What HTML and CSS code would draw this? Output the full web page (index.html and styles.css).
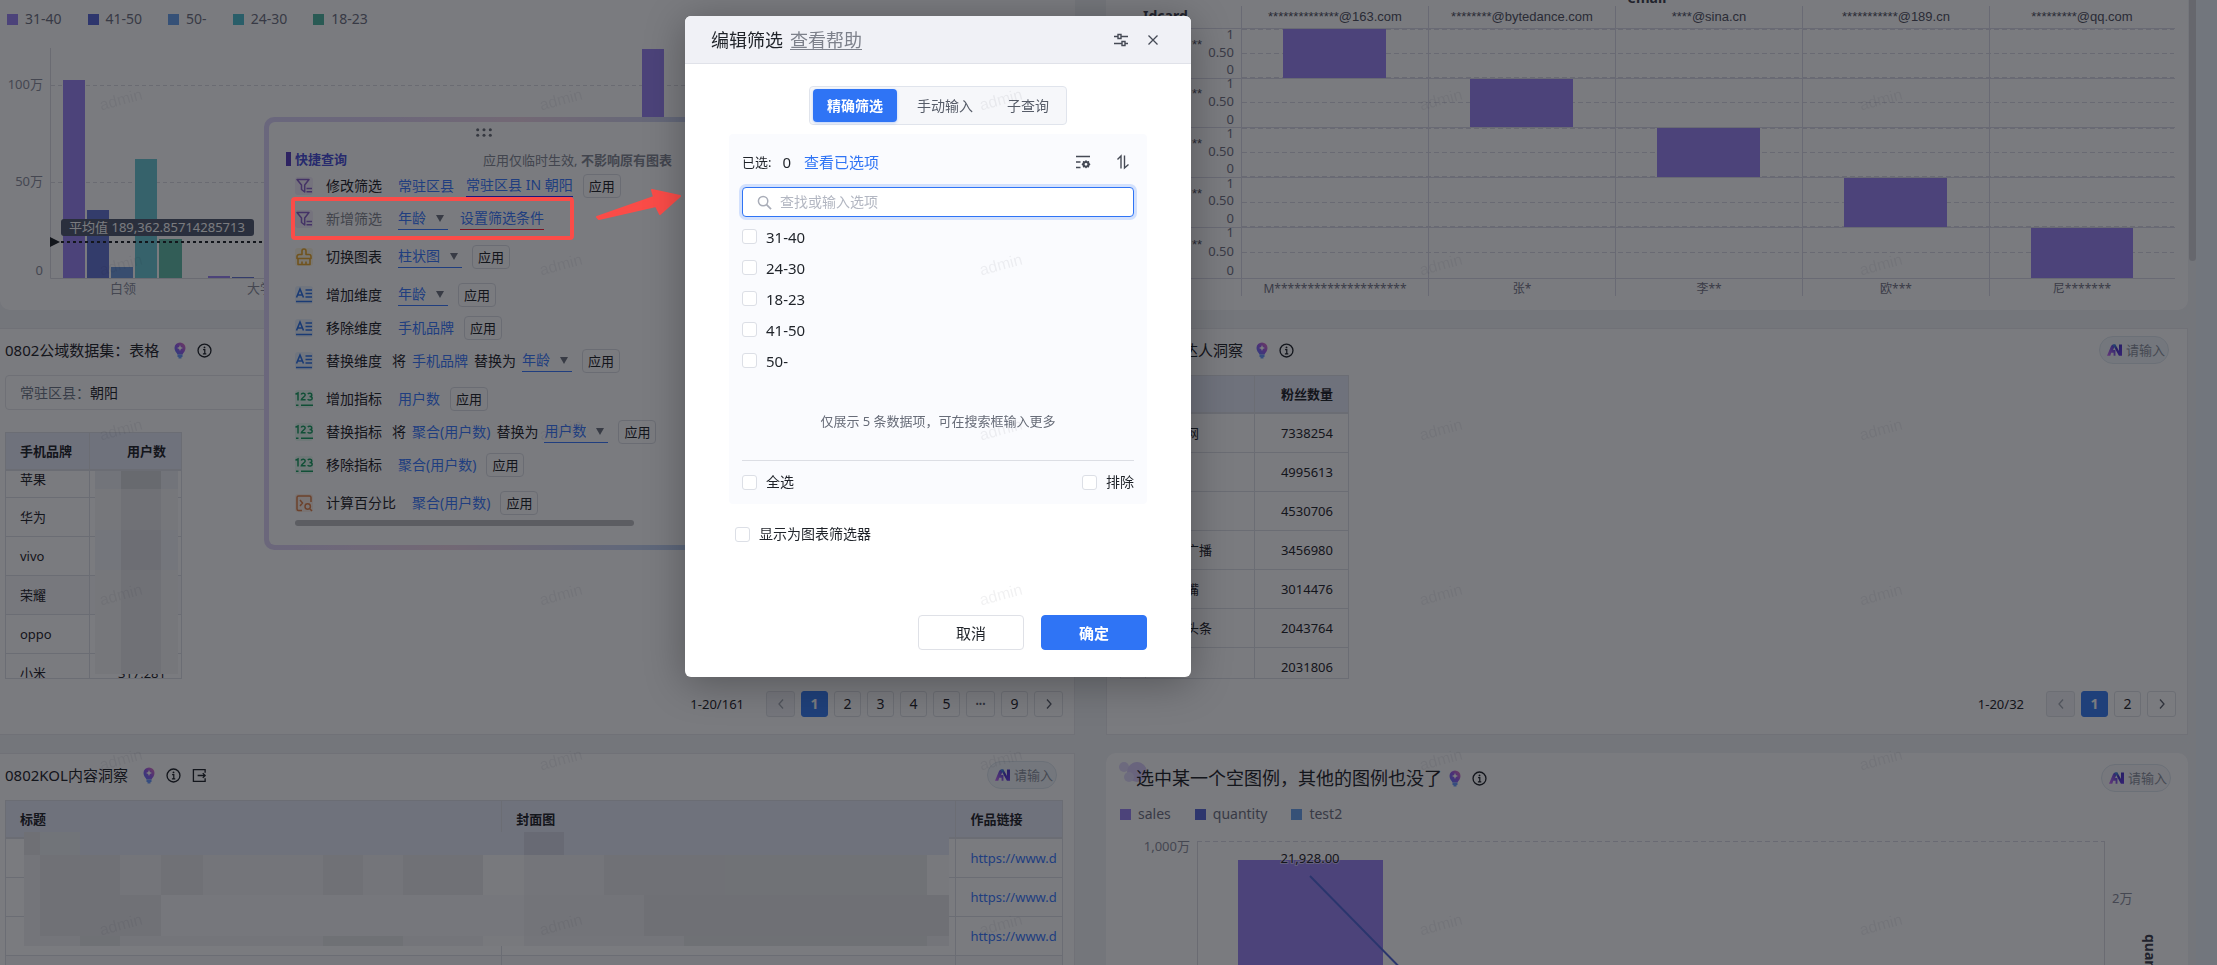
FILE: index.html
```html
<!DOCTYPE html>
<html lang="zh-CN">
<head>
<meta charset="utf-8">
<title>编辑筛选</title>
<link rel="stylesheet" href="styles.css">
</head>
<body>
<svg class="defs" aria-hidden="true">
  <defs>
    <linearGradient id="bulbGrad" x1="0" y1="1" x2="1" y2="0"><stop offset="0" stop-color="#5b7cff"/><stop offset=".5" stop-color="#9a5cf0"/><stop offset="1" stop-color="#f07ab8"/></linearGradient>
    <linearGradient id="logoA" x1="0" y1="1" x2="1" y2="0"><stop offset="0" stop-color="#d06cf5"/><stop offset="1" stop-color="#4a48d8"/></linearGradient>
    <linearGradient id="logoN" x1="0" y1="0" x2="1" y2="1"><stop offset="0" stop-color="#38b6e8"/><stop offset=".4" stop-color="#4b35c9"/><stop offset="1" stop-color="#6a3fe8"/></linearGradient>
    <symbol id="i-bulb" viewBox="0 0 12 17"><path d="M6 .5A5.500 5.500 0 0 0 .5 6c0 3 2 4.500 3 6.500h5c1-2 3-3.500 3-6.500A5.500 5.500 0 0 0 6 .5z" fill="url(#bulbGrad)"/><path d="M6 3l.9 2.100L9 6l-2.100.9L6 9l-.9-2.100L3 6l2.100-.9z" fill="#fff"/><path d="M3.500 12.500h5V15h-1v1.500h-3V15h-1z" fill="#6c9cff"/></symbol>
    <symbol id="i-info" viewBox="0 0 16 16"><circle cx="8" cy="8" r="6.900" fill="none" stroke="#1f2329" stroke-width="1.400"/><path d="M6.500 7h1.800v4.500M6.300 11.500h3.600" fill="none" stroke="#1f2329" stroke-width="1.300"/><circle cx="8" cy="4.700" r="1" fill="#1f2329"/></symbol>
    <symbol id="i-exit" viewBox="0 0 16 16"><path d="M14 5V1.700H1.500v12.600H14V11M6 8h8.500M11.500 5.500L14 8l-2.500 2.500" fill="none" stroke="#1f2329" stroke-width="1.400"/></symbol>
    <symbol id="i-logo" viewBox="0 0 16 14"><path d="M0 13L4 3.500C4.500 2 5.200 1 7 1h2L6.500 7H9v6H7v-3H4.500L3.500 13z" fill="url(#logoA)"/><path d="M6 1h3l3.800 7V1H16v12h-3.300L8 4.500z" fill="url(#logoN)"/></symbol>
    <symbol id="i-funnel" viewBox="0 0 18 18"><rect width="18" height="18" rx="3" fill="#f4edfb"/><path d="M2 2.500h12L9.700 8v7L6.500 12.500V8zM11.500 11.500H17M11.500 14.800H17" fill="none" stroke="#8a63c8" stroke-width="1.500" stroke-linejoin="round"/></symbol>
    <symbol id="i-brush" viewBox="0 0 18 18"><rect width="18" height="18" rx="3" fill="#fdf6e2"/><path d="M7 6.500V3a2 2 0 0 1 4 0v3.500h3a2 2 0 0 1 2 2V10.500H2V8.500a2 2 0 0 1 2-2zM3 10.500V16.500h12V10.500M7 13.500v3M11 13.500v3" fill="none" stroke="#eaa92c" stroke-width="1.600" stroke-linejoin="round"/></symbol>
    <symbol id="i-dim" viewBox="0 0 18 18"><rect width="18" height="18" rx="3" fill="#eaf2fd"/><path d="M1.500 11.500L5 3l3.500 8.500M2.800 9h4.400M10.500 4H17M10.500 7.500H17M10.500 11H17M1 15.500h16" fill="none" stroke="#2f74e8" stroke-width="1.600"/></symbol>
    <symbol id="i-num" viewBox="0 0 18 18"><rect width="18" height="18" rx="3" fill="#e8f8f0"/><path d="M.5 4.200L3 3v7.500M6.200 4.500c.4-1.700 4-1.700 4 .4 0 1.500-3.400 3-3.800 4.800h4.200M12.800 3.900c1-1.200 4-.9 4 1 0 1.300-1.300 1.600-2.300 1.600 1.400 0 2.700.4 2.700 1.800 0 2.100-3.400 2.200-4.600 1M6 15.300h12M1 15.300h2.500" fill="none" stroke="#1c9f63" stroke-width="1.500"/></symbol>
    <symbol id="i-calc" viewBox="0 0 18 18"><rect width="18" height="18" rx="3" fill="#fdf0e6"/><path d="M7 16.500H3.500a1.500 1.500 0 0 1-1.500-1.500V3.500A1.500 1.500 0 0 1 3.500 2h11A1.500 1.500 0 0 1 16 3.500V8M5 6l2.500 3L5 12M15 15l2 2" fill="none" stroke="#e0824a" stroke-width="1.500"/><circle cx="12.700" cy="12.500" r="2.700" fill="none" stroke="#e0824a" stroke-width="1.500"/></symbol>
    <symbol id="i-prev" viewBox="0 0 10 12"><path d="M7 1.500L3 6l4 4.500" fill="none" stroke="currentColor" stroke-width="1.300"/></symbol>
    <symbol id="i-next" viewBox="0 0 10 12"><path d="M3 1.500L7 6l-4 4.500" fill="none" stroke="currentColor" stroke-width="1.300"/></symbol>
  </defs>
</svg>

<div class="page">
  <main class="board">
    <section class="card card-top">
      <ul class="legend legend-top">
        <li><i class="c1"></i>31-40</li><li><i class="c2"></i>41-50</li><li><i class="c3"></i>50-</li><li><i class="c4"></i>24-30</li><li><i class="c5"></i>18-23</li>
      </ul>
      <svg class="chart chart-bars" viewBox="0 38 1075 258" preserveAspectRatio="xMinYMin meet">
        <path class="axis" d="M50.500 48V278.500H1060"/>
        <path class="grid" d="M51 85.500H1060M51 182.500H1060"/>
        <g class="f1"><rect x="63" y="80" width="22" height="198"/><rect x="208" y="276" width="22" height="2"/><rect x="642" y="49" width="22" height="229"/></g>
        <g class="f2"><rect x="87" y="210" width="22" height="68"/><rect x="232" y="277" width="22" height="1"/></g>
        <rect class="f3" x="111" y="267" width="22" height="11"/>
        <rect class="f4" x="135" y="159" width="22" height="119"/>
        <rect class="f5" x="159" y="239" width="23" height="39"/>
        <path class="avg" d="M55 242H1060"/><path class="ink" d="M50 237l10 5-10 5z"/>
        <rect class="tag" x="61" y="219" width="193" height="17" rx="3"/>
        <text class="tagtext" x="157" y="232" text-anchor="middle">平均值 189,362.85714285713</text>
        <g class="tick"><text x="43" y="89" text-anchor="end">100万</text><text x="43" y="186" text-anchor="end">50万</text><text x="43" y="275" text-anchor="end">0</text><text x="123" y="293" text-anchor="middle">白领</text><text x="247" y="293">大学生</text></g>
      </svg>
    </section>

    <section class="card card-top">
      <svg class="chart chart-matrix" viewBox="1106 0 1082 310" preserveAspectRatio="xMinYMin meet">
        <path class="grid2" d="M1242 53.500H2174M1242 102.500H2174M1242 152.500H2174M1242 202.500H2174M1242 252.500H2174M1242 29.500H2174M1242 77.500H2174M1242 128.500H2174M1242 176.500H2174M1242 226.500H2174"/>
        <path class="rule" d="M1120 28.500H2175M1120 78.500H2175M1120 127.500H2175M1120 177.500H2175M1120 227.500H2175M1120 278.500H2175M1241.500 6V296M1428.500 6V296M1615.500 6V296M1802.500 6V296M1989.500 6V296"/>
        <g class="f1"><rect x="1283" y="29" width="103" height="49"/><rect x="1470" y="79" width="103" height="48"/><rect x="1657" y="128" width="103" height="49"/><rect x="1844" y="178" width="103" height="49"/><rect x="2031" y="228" width="102" height="50"/></g>
        <g class="head"><text x="1143" y="21">Idcard</text><text x="1647" y="3" text-anchor="middle">email</text></g>
        <g class="mail" text-anchor="middle"><text x="1335" y="21">**************@163.com</text><text x="1522" y="21">********@bytedance.com</text><text x="1709" y="21">****@sina.cn</text><text x="1896" y="21">***********@189.cn</text><text x="2082" y="21">*********@qq.com</text>
          <text x="1197" y="49">**</text><text x="1197" y="98">**</text><text x="1197" y="148">**</text><text x="1197" y="198">**</text><text x="1197" y="249">**</text></g>
        <g class="tick2" text-anchor="end">
          <text x="1234" y="39">1</text><text x="1234" y="57">0.50</text><text x="1234" y="74">0</text>
          <text x="1234" y="88">1</text><text x="1234" y="106">0.50</text><text x="1234" y="124">0</text>
          <text x="1234" y="138">1</text><text x="1234" y="156">0.50</text><text x="1234" y="173">0</text>
          <text x="1234" y="188">1</text><text x="1234" y="205">0.50</text><text x="1234" y="223">0</text>
          <text x="1234" y="237">1</text><text x="1234" y="256">0.50</text><text x="1234" y="275">0</text></g>
        <g class="tick2 names" text-anchor="middle"><text x="1335" y="293">M********************</text><text x="1522" y="293">张*</text><text x="1709" y="293">李**</text><text x="1896" y="293">欧***</text><text x="2082" y="293">尼*******</text></g>
      </svg>
    </section>

    <section class="card card-left">
      <header class="card-head"><h2>0802公域数据集：表格</h2><svg class="bulb"><use href="#i-bulb"/></svg><svg class="info"><use href="#i-info"/></svg></header>
      <div class="filterbar"><span>常驻区县：</span>朝阳</div>
      <div class="tablewrap brand">
        <table>
          <colgroup><col class="w-84"><col></colgroup>
          <thead><tr><th>手机品牌</th><th class="num">用户数</th></tr></thead>
          <tbody>
            <tr class="cut"><td>苹果</td><td></td></tr><tr><td>华为</td><td></td></tr><tr><td>vivo</td><td></td></tr><tr class="alt"><td>荣耀</td><td></td></tr><tr><td>oppo</td><td></td></tr><tr><td>小米</td><td class="num">317,281</td></tr>
          </tbody>
        </table>
        <svg class="mask mask-brand" viewBox="95 470 83 203" aria-hidden="true">
          <path fill="#f6f6f7" d="M95 470h83v203H95z"/><path fill="#edf0f4" d="M95 470h83v18H95z"/><path fill="#f1f4f8" d="M95 529h83v40H95z"/><path fill="#e9e9eb" d="M121 488h40v185h-40z"/><path fill="#d8dadd" d="M121 470h40v18h-40z"/><path fill="#e2e3e6" d="M121 529h40v40h-40z"/>
        </svg>
      </div>
      <nav class="pager"><span>1-20/161</span><button class="wide off" aria-label="上一页"><svg><use href="#i-prev"/></svg></button><button class="on">1</button><button>2</button><button>3</button><button>4</button><button>5</button><button class="wide dots">•••</button><button>9</button><button class="wide" aria-label="下一页"><svg><use href="#i-next"/></svg></button></nav>
    </section>

    <section class="card card-right">
      <header class="card-head"><h2>0802KOL达人洞察</h2><svg class="bulb"><use href="#i-bulb"/></svg><svg class="info"><use href="#i-info"/></svg>
        <label class="ask"><svg><use href="#i-logo"/></svg><input aria-label="提问" placeholder="请输入"></label></header>
      <div class="tablewrap fans">
        <table>
          <colgroup><col class="w-25"><col class="w-110"><col></colgroup>
          <thead><tr><th></th><th></th><th class="num">粉丝数量</th></tr></thead>
          <tbody>
            <tr><td></td><td>央视网</td><td class="num">7338254</td></tr><tr><td></td><td></td><td class="num">4995613</td></tr><tr><td></td><td></td><td class="num">4530706</td></tr><tr><td></td><td>中央广播</td><td class="num">3456980</td></tr><tr><td></td><td>电影嘴</td><td class="num">3014476</td></tr><tr><td></td><td>今日头条</td><td class="num">2043764</td></tr><tr><td></td><td></td><td class="num">2031806</td></tr>
          </tbody>
        </table>
      </div>
      <nav class="pager"><span>1-20/32</span><button class="wide off" aria-label="上一页"><svg><use href="#i-prev"/></svg></button><button class="on">1</button><button>2</button><button class="wide" aria-label="下一页"><svg><use href="#i-next"/></svg></button></nav>
    </section>

    <section class="card card-left">
      <header class="card-head"><h2>0802KOL内容洞察</h2><svg class="bulb"><use href="#i-bulb"/></svg><svg class="info"><use href="#i-info"/></svg><svg class="info"><use href="#i-exit"/></svg>
        <label class="ask"><svg><use href="#i-logo"/></svg><input aria-label="提问" placeholder="请输入"></label></header>
      <div class="tablewrap works">
        <table>
          <colgroup><col class="p-47"><col class="p-43"><col></colgroup>
          <thead><tr><th>标题</th><th>封面图</th><th>作品链接</th></tr></thead>
          <tbody>
            <tr><td></td><td></td><td><a href="#">https://www.d</a></td></tr><tr><td></td><td></td><td><a href="#">https://www.d</a></td></tr><tr><td></td><td></td><td><a href="#">https://www.d</a></td></tr><tr class="alt"><td></td><td></td><td></td></tr>
          </tbody>
        </table>
        <svg class="mask mask-works" viewBox="24 831 925 114" aria-hidden="true">
          <path fill="#f2f2f4" d="M24 831h925v114H24z"/>
          <path fill="#e7ebf8" d="M80 831h869v23H80z"/><path fill="#e6e7e9" d="M24 831h16v23H24z"/><path fill="#eceff1" d="M40 831h40v23H40z"/><path fill="#d8d9e6" d="M524 831h40v23h-40z"/>
          <path fill="#e9eaec" d="M40 854h80v40H40zM161 854h42v40h-42zM323 854h40v40h-40zM403 854h80v40h-80zM604 854h121v40H604z"/><path fill="#fafafb" d="M483 854h41v40h-41zM927 854h22v40h-22z"/><path fill="#eaebec" d="M725 854h202v40H725z"/>
          <path fill="#e9eaec" d="M40 894h121v41H40z"/><path fill="#f6f6f8" d="M161 894h363v41H161z"/><path fill="#efeff1" d="M524 894h120v41H524z"/><path fill="#e7e8ea" d="M644 894h305v41H644z"/>
          <path fill="#e8e9ea" d="M80 935h40v10H80zM323 935h80v10h-80zM684 935h243v10H684z"/><path fill="#fafafb" d="M483 935h41v10h-41z"/>
        </svg>
      </div>
    </section>

    <section class="card card-sales">
      <header class="card-head"><svg class="cloud" viewBox="0 0 30 24"><circle cx="6" cy="6" r="5" fill="#e3dafc"/><circle cx="19" cy="11" r="10" fill="#d9cdfa"/><circle cx="11" cy="16" r="5" fill="#e3dcfc"/></svg>
        <h2 class="big">选中某一个空图例，其他的图例也没了</h2><svg class="bulb"><use href="#i-bulb"/></svg><svg class="info"><use href="#i-info"/></svg>
        <label class="ask plain"><svg><use href="#i-logo"/></svg><input aria-label="提问" placeholder="请输入"></label></header>
      <ul class="legend"><li><i class="c1"></i>sales</li><li><i class="c2"></i>quantity</li><li><i class="c3"></i>test2</li></ul>
      <svg class="chart chart-sales" viewBox="1106 824 1082 160" preserveAspectRatio="xMinYMin meet">
        <path class="axis" d="M1197.500 840V984M2104.500 840V984"/><path class="grid2" d="M1197 840.500H2104"/>
        <rect class="f1" x="1238" y="859" width="145" height="125"/>
        <path class="trend" d="M1310 875L1417 984"/>
        <g class="tick"><text x="1190" y="850" text-anchor="end">1,000万</text><text x="2112" y="902">2万</text></g>
        <text class="value" x="1310" y="862" text-anchor="middle">21,928.00</text>
        <text class="head" transform="translate(2145 933) rotate(90)">quantity</text>
      </svg>
    </section>
    <div class="scrollthumb"></div>
  </main>
  <aside class="edge"></aside>

  <section class="quick">
    <div class="quick-body">
      <svg class="grip" viewBox="0 0 18 10"><g fill="#6b7078"><circle cx="2" cy="2" r="1.700"/><circle cx="9" cy="2" r="1.700"/><circle cx="16" cy="2" r="1.700"/><circle cx="2" cy="8" r="1.700"/><circle cx="9" cy="8" r="1.700"/><circle cx="16" cy="8" r="1.700"/></g></svg>
      <header class="quick-head"><h3>快捷查询</h3><p>应用仅临时生效, <b>不影响原有图表</b></p></header>
      <div class="group">
        <div class="row"><svg><use href="#i-funnel"/></svg><span class="name">修改筛选</span><a href="#">常驻区县</a><a href="#" class="cond">常驻区县 IN 朝阳</a><button>应用</button></div>
        <div class="row"><svg><use href="#i-funnel"/></svg><span class="name muted">新增筛选</span><span class="pick"><select aria-label="筛选字段"><option>年龄</option></select></span><a href="#" class="cond err">设置筛选条件</a></div>
      </div>
      <div class="group"><div class="row"><svg><use href="#i-brush"/></svg><span class="name">切换图表</span><span class="pick"><select aria-label="图表类型"><option>柱状图</option></select></span><button>应用</button></div></div>
      <div class="group">
        <div class="row"><svg><use href="#i-dim"/></svg><span class="name">增加维度</span><span class="pick"><select aria-label="增加的维度"><option>年龄</option></select></span><button>应用</button></div>
        <div class="row"><svg><use href="#i-dim"/></svg><span class="name">移除维度</span><a href="#">手机品牌</a><button>应用</button></div>
        <div class="row swap"><svg><use href="#i-dim"/></svg><span class="name">替换维度</span><span>将</span><a href="#">手机品牌</a><span>替换为</span><span class="pick"><select aria-label="替换为维度"><option>年龄</option></select></span><button>应用</button></div>
      </div>
      <div class="group">
        <div class="row"><svg><use href="#i-num"/></svg><span class="name">增加指标</span><a href="#">用户数</a><button>应用</button></div>
        <div class="row swap"><svg><use href="#i-num"/></svg><span class="name">替换指标</span><span>将</span><a href="#">聚合(用户数)</a><span>替换为</span><span class="pick"><select aria-label="替换为指标"><option>用户数</option></select></span><button>应用</button></div>
        <div class="row"><svg><use href="#i-num"/></svg><span class="name">移除指标</span><a href="#">聚合(用户数)</a><button>应用</button></div>
      </div>
      <div class="group"><div class="row"><svg><use href="#i-calc"/></svg><span class="name">计算百分比</span><a href="#">聚合(用户数)</a><button>应用</button></div></div>
      <div class="hscroll"></div>
    </div>
  </section>
</div>

<div class="overlay"></div>
<div class="callout"></div>
<svg class="arrow" viewBox="596 186 86 36"><path d="M597 217l57-20-2-7 28 6-20 18-4-8-57 13z" fill="#fb4c48" stroke="#fb4c48" stroke-width="2" stroke-linejoin="round"/></svg>

<div class="modal" role="dialog" aria-labelledby="dlg-title">
  <header class="modal-head">
    <h1 id="dlg-title">编辑筛选</h1><a href="#">查看帮助</a>
    <button aria-label="设置" class="push"><svg viewBox="0 0 16 16"><path d="M1 4.500h3.500M8.500 4.500H15M5 2.500h3v4H5zM1 11.500h7.500M12.500 11.500H15M9 9.500h3v4H9z" fill="none" stroke="#454a55" stroke-width="1.400"/></svg></button>
    <button aria-label="关闭"><svg viewBox="0 0 16 16"><path d="M3.500 3.500l9 9M12.500 3.500l-9 9" fill="none" stroke="#454a55" stroke-width="1.300"/></svg></button>
  </header>
  <div class="modal-body">
    <div class="tabs"><button class="active">精确筛选</button><button>手动输入</button><button>子查询</button></div>
    <div class="choice">
      <div class="picked"><span>已选:</span><output>0</output><a href="#">查看已选项</a>
        <button aria-label="列表设置" class="push"><svg viewBox="0 0 16 16"><path d="M1 2.500h14M1 8h4.500M1 13.500h4.500" fill="none" stroke="#454a55" stroke-width="1.400"/><path d="M11 6l1.200 1.300 1.800-.2.300 1.800 1.200 1.400-1.200 1.400-.3 1.800-1.800-.2L11 14.600l-1.200-1.300-1.800.2-.3-1.800-1.200-1.400 1.200-1.400.3-1.800 1.800.2zM11 8.900a1.400 1.400 0 1 0 0 2.800 1.400 1.400 0 0 0 0-2.800z" fill="#454a55" fill-rule="evenodd"/></svg></button>
        <button aria-label="排序"><svg viewBox="0 0 16 16"><path d="M2.500 5.500L6 2v12.500M9.500 1.500V14L13.500 10.500" fill="none" stroke="#454a55" stroke-width="1.400"/></svg></button></div>
      <label class="search"><svg viewBox="0 0 16 16"><circle cx="6.500" cy="6.500" r="5" fill="none" stroke="#a9adb8" stroke-width="1.600"/><path d="M10.200 10.200L15 15" stroke="#a9adb8" stroke-width="1.800"/></svg><input type="text" aria-label="搜索选项" placeholder="查找或输入选项"></label>
      <div class="options">
        <label><input type="checkbox">31-40</label><label><input type="checkbox">24-30</label><label><input type="checkbox">18-23</label><label><input type="checkbox">41-50</label><label><input type="checkbox">50-</label>
      </div>
      <p class="note">仅展示 5 条数据项，可在搜索框输入更多</p>
      <div class="foot"><label><input type="checkbox">全选</label><label><input type="checkbox">排除</label></div>
    </div>
    <label class="asfilter"><input type="checkbox">显示为图表筛选器</label>
    <div class="actions"><button>取消</button><button class="primary">确定</button></div>
  </div>
</div>

<svg class="watermark" aria-hidden="true"><defs><pattern id="wm" width="440" height="165" patternUnits="userSpaceOnUse"><text x="121" y="105" text-anchor="middle" transform="rotate(-15 121 100)">admin</text></pattern></defs><rect width="100%" height="100%" fill="url(#wm)"/></svg>
</body>
</html>
```
FILE: styles.css
```css
* { box-sizing: border-box; }
body { margin: 0; height: 100vh; overflow: hidden; background: #f2f3f6; color: #1f2329; font: 13px/20px "Noto Sans", "Noto Sans CJK SC", sans-serif; }
h1, h2, h3, p, ul { margin: 0; padding: 0; font-weight: 400; }
button, input, select { font: inherit; color: inherit; margin: 0; padding: 0; border: 0; background: none; }
a { color: #3b7bff; text-decoration: none; }
.defs { position: absolute; width: 0; height: 0; }

.page { display: flex; height: 100vh; overflow: hidden; }
.board { position: relative; flex: 1; display: grid; grid-template-columns: 1075fr 1082fr; grid-template-rows: auto auto auto; column-gap: 31px; row-gap: 18px; align-content: start; padding-right: 8px; }
.edge { width: 21px; background: #eef4fb; }
.scrollthumb { position: absolute; right: 0; top: 0; width: 7px; height: 261px; border-radius: 0 0 4px 4px; background: #d3d4d8; }
.card { min-width: 0; background: #fff; border: 1px solid #e9eaee; }
.card-top { border: 0; border-radius: 0 0 10px 10px; }
.card-left { border-left: 0; padding: 0 11px 17px 5px; }
.card-right { padding: 0 11px 17px 13px; }
.card-sales { border: 0; border-radius: 10px; }
.card-head { display: flex; align-items: center; height: 46px; padding-bottom: 4px; }
.card-head h2 { font-size: 15px; }
.bulb { width: 12px; height: 17px; margin-left: 15px; }
.info { width: 15px; height: 15px; margin-left: 11px; }
.card-right .bulb { margin-left: 13px; }
.ask { display: flex; align-items: center; gap: 4px; width: 70px; height: 28px; margin-left: auto; padding-left: 7px; border: 1px solid #dfe7ee; border-radius: 14px; background: #f2f7fa; }
.card-right .ask { margin-right: 7px; }
.card-left .ask { margin-right: 6px; }
.ask svg { flex: none; width: 15px; height: 14px; }
.ask input { width: 42px; outline: 0; }
.ask input::placeholder { color: #8d929e; opacity: 1; }
.ask.plain { background: #f8f8fa; }

.legend { display: flex; gap: 26px; list-style: none; font-size: 14px; color: #6f7282; }
.legend li { display: flex; align-items: center; gap: 7px; }
.legend i { width: 11px; height: 11px; }
.legend-top { height: 38px; padding-left: 7px; }
.c1 { background: #9b86f4; } .c2 { background: #5a69d8; } .c3 { background: #6ba4ee; } .c4 { background: #4fc0d0; } .c5 { background: #4fb8a2; }
.f1 { fill: #9b86f4; } .f2 { fill: #6577d4; } .f3 { fill: #6f9cdc; } .f4 { fill: #6cc8d4; } .f5 { fill: #62bda9; }
.chart { display: block; width: 100%; font-size: 13px; }
.chart-bars { height: 258px; margin-bottom: 14px; }
.chart-matrix { height: 310px; }
.chart-sales { height: 160px; }
.axis { fill: none; stroke: #dcdde3; }
.grid { fill: none; stroke: #dcdde3; stroke-dasharray: 4 3; }
.grid2 { fill: none; stroke: #dadae4; stroke-dasharray: 5 3; }
.rule { fill: none; stroke: #dadbe6; }
.avg { stroke: #1f2329; stroke-width: 2; stroke-dasharray: 3 3; }
.ink { fill: #1f2329; }
.tag { fill: #515a70; }
.tagtext { fill: #fff; }
.tick { fill: #8b8e9c; }
.tick2 { fill: #747585; }
.names { font-size: 12px; }
.mail { fill: #51525f; font-family: "Liberation Sans", sans-serif; }
.head { fill: #3e3f4c; font-size: 14px; font-weight: 700; }
.trend { fill: none; stroke: #5268d8; stroke-width: 2; }
.value { fill: #1f2329; stroke: #fff; stroke-width: 2; stroke-opacity: .5; paint-order: stroke; }

.filterbar { height: 35px; margin-bottom: 22px; padding-left: 14px; border: 1px solid #e6e7eb; border-radius: 4px; font-size: 14px; line-height: 33px; }
.filterbar span { color: #707987; }
.tablewrap { position: relative; overflow: hidden; border: 1px solid #dfe1e8; }
.brand { width: 177px; height: 247px; }
.fans { width: 229px; height: 304px; }
table { width: 100%; border-collapse: separate; border-spacing: 0; table-layout: fixed; }
th, td { height: 39px; padding: 0 15px 0 14px; overflow: hidden; text-align: left; white-space: nowrap; border-right: 1px solid #dfe1e8; border-bottom: 1px solid #dfe1e8; }
th { height: 38px; font-weight: 700; background: #e8ecf8; border-bottom-width: 2px; }
th:last-child, td:last-child { border-right: 0; }
.num { text-align: right; }
.cut td { height: 27px; line-height: 16px; vertical-align: top; }
.alt td { background: #f8f8fa; }
.w-84 { width: 84px; } .w-25 { width: 25px; } .w-110 { width: 109px; }
.p-47 { width: 47%; } .p-43 { width: 43%; }
.works td:last-child { padding-right: 0; }
.mask { position: absolute; }
.mask-brand { left: 89px; top: 38px; width: 83px; height: 203px; }
.mask-works { left: 18px; top: 31px; width: 925px; height: 114px; }
.pager { display: flex; justify-content: flex-end; align-items: center; gap: 6px; margin-top: 12px; }
.pager span { margin-right: 16px; }
.pager button { display: flex; align-items: center; justify-content: center; width: 27px; height: 26px; border: 1px solid #e0e2e8; border-radius: 3px; font-size: 14px; }
.pager svg { width: 10px; height: 12px; }
.pager .wide { width: 29px; color: #5b606c; }
.pager .dots { font-size: 9px; }
.pager .off { background: #f3f5f8; color: #a5a9b3; }
.pager .on { background: #3a7ff5; border-color: #3a7ff5; color: #fff; font-weight: 700; }

.cloud { width: 30px; height: 24px; margin-left: 12px; margin-right: -12px; align-self: flex-start; margin-top: 8px; }
.card-sales .card-head { height: 50px; padding-bottom: 0; }
.card-head h2.big { position: relative; font-size: 18px; }
.card-sales .bulb { margin-left: 7px; }
.card-sales .ask { margin-right: 17px; }
.card-sales .legend { height: 22px; padding-left: 14px; gap: 24px; }

.quick { position: absolute; left: 264px; top: 117px; width: 440px; padding: 5px; border-radius: 10px; background: linear-gradient(100deg, #dcd3fa 0%, #e0d4f6 20%, #efd6e8 50%, #c9d6f4 85%, #bcd2f6 100%); }
.quick-body { height: 423px; padding: 6px 17px 0; border-radius: 6px; background: #fff; }
.grip { display: block; width: 18px; height: 9px; margin: 0 auto 14px; }
.quick-head { display: flex; justify-content: space-between; height: 18px; line-height: 18px; padding-right: 10px; }
.quick-head h3 { padding-left: 4px; border-left: 5px solid #5a3fc0; height: 14px; margin-top: 1px; line-height: 14px; font-size: 13px; font-weight: 700; color: #4a4fd8; }
.quick-head p { color: #868a94; }
.group { margin-bottom: 5px; padding-left: 9px; }
.row { display: flex; align-items: center; height: 33px; font-size: 14px; white-space: nowrap; }
.row svg { flex: none; width: 18px; height: 18px; }
.row .name { margin: 0 16px 0 13px; }
.row .muted { color: #85888f; }
.row button { height: 24px; margin-left: 10px; padding: 0 5px; border: 1px solid #dddfe5; border-radius: 4px; font-size: 13px; line-height: 20px; }
.swap .name { margin-right: 10px; }
.swap a { margin: 0 6px; }
.swap .pick { margin-left: 6px; }
.cond { margin-left: 12px; line-height: 22px; border-bottom: 1px solid #2a2aff; }
.err { border-color: #ff2038; }
.pick { position: relative; border-bottom: 1px solid #3b7bff; }
.pick select { display: block; appearance: none; height: 22px; padding-right: 22px; color: #3b7bff; }
.pick::after { content: ""; position: absolute; right: 4px; top: 8px; border: 4px solid transparent; border-top: 7px solid #6f7580; border-bottom: 0; pointer-events: none; }
.hscroll { width: 339px; height: 6px; margin-left: 9px; margin-top: -4px; border-radius: 3px; background: #bdbdc0; }

.overlay { position: fixed; inset: 0; background: rgba(10, 12, 18, .54); }
.callout { position: absolute; left: 291px; top: 197px; width: 283px; height: 43px; border: 4px solid #fb4c48; border-radius: 4px; }
.arrow { position: absolute; left: 596px; top: 186px; width: 86px; height: 36px; }

.modal { position: absolute; left: 685px; top: 16px; width: 506px; overflow: hidden; border-radius: 6px; background: #fff; box-shadow: 0 6px 40px rgba(0, 0, 0, .3); font-size: 14px; }
.modal button svg { display: block; width: 16px; height: 16px; }
.modal-head { display: flex; align-items: center; height: 48px; padding: 0 30px 0 26px; border-bottom: 1px solid #e0e2e9; background: #f0f1f6; font-size: 18px; line-height: 24px; }
.modal-head h1 { font-size: 18px; margin-right: 7px; }
.modal-head a { color: #7d818b; text-decoration: underline; text-underline-offset: 2px; }
.modal-head button { margin-left: 16px; }
.modal-head .push, .picked .push { margin-left: auto; }
.modal-body { padding: 22px 44px 27px; }
.tabs { display: flex; gap: 6px; width: fit-content; margin: 0 auto 9px; padding: 2px 3px; border: 1px solid #e0e4ec; border-radius: 4px; background: #f6f7fa; }
.tabs button { height: 33px; padding: 0 14px; border-radius: 4px; color: #565c68; }
.tabs .active { background: #2f74f5; color: #fff; font-weight: 700; box-shadow: 0 1px 3px rgba(47, 116, 245, .3); }
.choice { padding: 16px 13px 12px; border-radius: 4px; background: #fafbfe; }
.picked { display: flex; align-items: center; height: 24px; margin-bottom: 13px; font-size: 13px; }
.picked output { margin: 0 13px 0 11px; font-size: 15px; }
.picked a { font-size: 15px; color: #2f74f5; }
.picked button { margin-left: 24px; margin-right: 3px; }
.picked .push { margin-right: 0; }
.search { display: flex; align-items: center; gap: 8px; height: 30px; padding-left: 14px; border: 1px solid #2f74f5; border-radius: 4px; background: #fff; box-shadow: 0 0 0 3px #d3e1fd; }
.search svg { width: 15px; height: 15px; }
.search input { flex: 1; outline: 0; }
.search input::placeholder { color: #b3b7c2; opacity: 1; }
.modal input[type=checkbox] { appearance: none; width: 15px; height: 15px; border: 1px solid #dcdfe6; border-radius: 3px; background: #fff; }
.options { padding-top: 4px; }
.options label { display: flex; align-items: center; gap: 9px; height: 31px; font-size: 15px; }
.note { padding: 35px 0 29px; text-align: center; font-size: 13px; color: #676c78; border-bottom: 1px solid #dcdee4; }
.foot { display: flex; justify-content: space-between; padding-top: 11px; }
.foot label, .asfilter { display: flex; align-items: center; gap: 9px; }
.asfilter { margin: 20px 0 71px 6px; }
.actions { display: flex; justify-content: flex-end; gap: 17px; }
.actions button { width: 106px; height: 35px; border: 1px solid #dfe1e7; border-radius: 4px; font-size: 15px; }
.actions .primary { background: #2f74f5; border-color: #2f74f5; color: #fff; font-weight: 700; }

.watermark { position: fixed; inset: 0; width: 100%; height: 100%; pointer-events: none; }
.watermark text { font: 16px "Liberation Sans", sans-serif; fill: rgba(20, 25, 40, .06); }
```
